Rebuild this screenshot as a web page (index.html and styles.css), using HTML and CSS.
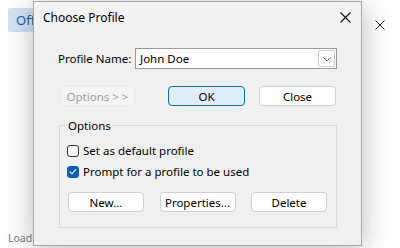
FILE: index.html
```html
<!DOCTYPE html>
<html lang="en">
<head>
    <meta charset="UTF-8">
    <title>Choose Profile</title>
    <link rel="stylesheet" href="styles.css">
</head>
<body>
    <div class="app">
        <div class="app-top">
            <div class="toggle">Off</div>
            <svg class="app-close" width="10" height="10" viewBox="0 0 10 10">
                <path d="M0.5 0.5 L9.5 9.5 M9.5 0.5 L0.5 9.5" stroke="#222" stroke-width="1"/>
            </svg>
        </div>
        <div class="loading">Loading...</div>
    </div>

    <!-- Dialog over the app -->
    <div class="dialog">
        <div class="title-bar">
            <span class="title">Choose Profile</span>
            <svg class="title-close" width="11" height="11" viewBox="0 0 11 11">
                <path d="M0.5 0.5 L10.5 10.5 M10.5 0.5 L0.5 10.5" stroke="#111" stroke-width="1.1"/>
            </svg>
        </div>
        <div class="dialog-body">
            <div class="name-row">
                <span class="name-label">Profile Name:</span>
                <div class="combo">
                    <span class="combo-text">John Doe</span>
                    <span class="combo-drop">
                        <svg width="8" height="5" viewBox="0 0 8 5">
                            <path d="M0.5 0.5 L4 4 L7.5 0.5" fill="none" stroke="#666" stroke-width="1"/>
                        </svg>
                    </span>
                </div>
            </div>
            <div class="button-row">
                <button class="btn btn-disabled">Options &gt; &gt;</button>
                <button class="btn btn-default">OK</button>
                <button class="btn">Close</button>
            </div>
            <fieldset class="options">
                <legend>Options</legend>
                <label class="check-row">
                    <span class="check"></span>
                    Set as default profile
                </label>
                <label class="check-row">
                    <span class="check checked">
                        <svg width="8" height="7" viewBox="0 0 8 7">
                            <path d="M0.8 3.6 L3 5.8 L7.2 1" fill="none" stroke="#fff" stroke-width="1.1"/>
                        </svg>
                    </span>
                    Prompt for a profile to be used
                </label>
                <div class="group-buttons">
                    <button class="btn">New...</button>
                    <button class="btn">Properties...</button>
                    <button class="btn">Delete</button>
                </div>
            </fieldset>
        </div>
    </div>
</body>
</html>
```

FILE: styles.css
```css
/* Reset and Base Styles */
* {
    margin: 0;
    padding: 0;
    box-sizing: border-box;
}
body {
    font-family: "Noto Sans", "Open Sans", sans-serif;
    font-size: 11.5px;
    color: #000;
    background: #fff;
    width: 400px;
    height: 248px;
    overflow: hidden;
    position: relative;
}
/* App behind the dialog */
.app {
    height: 248px;
    display: flex;
    flex-direction: column;
    justify-content: space-between;
    padding: 8px 15px 3px 8px;
}
.app-top {
    display: flex;
    justify-content: space-between;
    align-items: flex-start;
}
.toggle {
    width: 44px;
    height: 24px;
    padding: 3px 0 0 8px;
    background: #d0e3f5;
    color: #1c5fa8;
    font-size: 13px;
    border-radius: 2px;
}
.app-close {
    margin-top: 12px;
}
.loading {
    color: #7a7a7a;
    font-size: 10.5px;
}
/* Dialog */
.dialog {
    position: absolute;
    left: 33px;
    top: 1px;
    width: 329px;
    height: 245px;
    background: #f0f0f0;
    border: 1px solid #a8a8a8;
    box-shadow: 0 4px 28px rgba(0,0,0,0.28);
}
.title-bar {
    height: 31px;
    background: #f3f3f3;
    display: flex;
    align-items: center;
    justify-content: space-between;
    padding: 0 10px 0 9px;
}
.title {
    font-size: 12px;
}
.title-close {
    margin-top: -1px;
}
.dialog-body {
    padding: 15px 24px 0 24px;
}
/* Name row */
.name-row {
    display: flex;
    align-items: center;
}
.name-label {
    width: 77px;
    white-space: nowrap;
}
.combo {
    width: 202px;
    height: 21px;
    background: #fff;
    border: 1px solid #999;
    display: flex;
    align-items: center;
    justify-content: space-between;
    padding: 0 1px 0 4px;
}
.combo-drop {
    width: 17px;
    height: 17px;
    border: 1px solid #ccc;
    border-radius: 2px;
    display: flex;
    align-items: center;
    justify-content: center;
    padding-top: 1px;
}
/* Buttons */
.btn {
    width: 77px;
    height: 20px;
    font-family: inherit;
    font-size: 11.5px;
    color: #000;
    background: #fdfdfd;
    border: 1px solid #d0d0d0;
    border-radius: 4px;
    white-space: nowrap;
}
.btn-default {
    background: #e0edf9;
    border-color: #0a6cc4;
}
.btn-disabled {
    width: 75px;
    color: #9c9c9c;
    background: #f5f5f5;
    border-color: #ebebeb;
}
.button-row {
    display: flex;
    margin: 17px 0 0 2px;
}
.button-row .btn-default {
    margin-left: 33px;
}
.button-row .btn-default + .btn {
    margin-left: 14px;
}
/* Options group */
.options {
    margin: 12px 0 0 1px;
    width: 278px;
    height: 110px;
    border: 1px solid #dadada;
    padding: 7px 9px 0 7px;
}
.options legend {
    padding: 0 1px;
}
.check-row {
    display: flex;
    align-items: center;
    gap: 4px;
    height: 21px;
}
.check {
    width: 12px;
    height: 12px;
    border: 1px solid #333;
    border-radius: 3px;
    background: #f7f7f7;
    display: flex;
    align-items: center;
    justify-content: center;
}
.check.checked {
    background: #005fb8;
    border-color: #005fb8;
}
.group-buttons {
    display: flex;
    justify-content: space-between;
    margin: 10px 0 0 1px;
}
.group-buttons .btn {
    width: 76px;
}
```
